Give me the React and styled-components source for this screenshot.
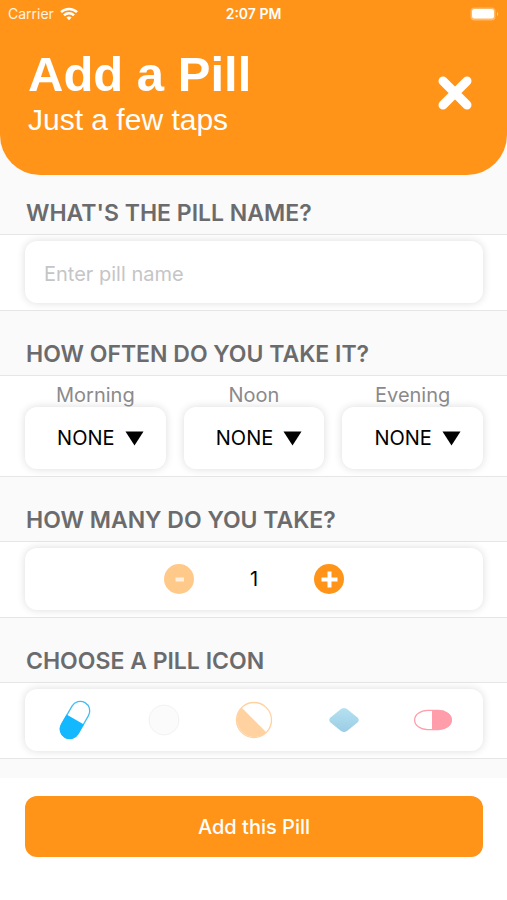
import React, { useState } from 'react';
import styled, { createGlobalStyle } from 'styled-components';

const ORANGE = '#ff9418';

const GlobalStyle = createGlobalStyle`
  * {
    box-sizing: border-box;
  }
  body {
    margin: 0;
    background: #fff;
    font-family: Inter, "Liberation Sans", sans-serif;
  }
  button, input, select {
    font-family: inherit;
  }
`;

const Header = styled.header`
  position: relative;
  height: 175px;
  margin-bottom: -45px;
  background: ${ORANGE};
  border-radius: 0 0 40px 40px;
  color: #fff;
`;

const StatusBar = styled.div`
  display: grid;
  grid-template-columns: 1fr auto 1fr;
  align-items: center;
  height: 27px;
  padding: 0 8px;
  font-size: 14px;
`;

const Carrier = styled.div`
  display: flex;
  align-items: center;
  gap: 6px;
  color: #fff3e3;
`;

const Clock = styled.div`
  font-weight: 600;
`;

const Battery = styled.svg`
  justify-self: end;
`;

const TitleRow = styled.div`
  display: flex;
  align-items: center;
  justify-content: space-between;
  padding: 20px 34px 0 28px;
`;

const Title = styled.h1`
  margin: 0;
  font: bold 49px/54px "Liberation Sans", sans-serif;
`;

const SubTitle = styled.p`
  margin: 0;
  font: 30px/38px "Liberation Sans", sans-serif;
`;

const CloseButton = styled.button`
  display: flex;
  padding: 0;
  border: 0;
  background: none;
  cursor: pointer;
`;

const Form = styled.form`
  padding-top: 40px;
  background: #fafafa;
`;

const SectionTitle = styled.h2`
  display: flex;
  align-items: flex-end;
  height: 64px;
  margin: 0;
  padding: 0 26px 5px;
  color: #6b6b6d;
  font-size: 23px;
  font-weight: 600;
  line-height: 32px;
`;

const SectionBody = styled.div`
  padding: ${({ $labeled }) => ($labeled ? '8px' : '6px')} 24px 7px 25px;
  background: #fff;
  border-top: 1px solid #e6e6e7;
  border-bottom: 1px solid #e6e6e7;
`;

const Card = styled.div`
  display: flex;
  align-items: center;
  justify-content: center;
  gap: ${({ $gap }) => $gap || '0'};
  height: 62px;
  padding: ${({ $padding }) => $padding || '0'};
  background: #fff;
  border-radius: 12px;
  box-shadow: 0 0 8px rgba(0, 0, 0, 0.14);
`;

const NameInput = styled.input`
  width: 100%;
  height: 100%;
  padding: 3px 19px 0;
  border: 0;
  border-radius: 12px;
  background: none;
  font-size: 20px;
  &::placeholder {
    color: #c5c5c7;
  }
`;

const Times = styled.div`
  display: grid;
  grid-template-columns: repeat(3, 1fr);
  gap: 18px;
`;

const TimeLabel = styled.label`
  display: block;
  color: #8a8a8c;
  font-size: 20px;
  line-height: 23px;
  text-align: center;
`;

const TimeSelect = styled.select`
  appearance: none;
  field-sizing: content;
  padding: 0;
  border: 0;
  background: none;
  color: #000;
  font-size: 20px;
`;

const RoundButton = styled.button`
  display: flex;
  width: 30px;
  height: 30px;
  padding: 0;
  border: 0;
  border-radius: 50%;
  background: ${ORANGE};
  opacity: ${({ disabled }) => (disabled ? 0.5 : 1)};
`;

const Count = styled.output`
  width: 30px;
  font-size: 20px;
  text-align: center;
`;

const IconButton = styled.button`
  display: flex;
  flex: 1;
  justify-content: center;
  padding: 0;
  border: 0;
  background: none;
  opacity: ${({ $selected }) => ($selected ? 1 : 0.45)};
`;

const Footer = styled.div`
  margin-top: 19px;
  padding: 18px 24px 44px 25px;
  background: #fff;
`;

const SubmitButton = styled.button`
  display: block;
  width: 100%;
  height: 61px;
  border: 0;
  border-radius: 12px;
  background: ${ORANGE};
  color: #fff;
  font-size: 20px;
  font-weight: 500;
`;

const WifiIcon = () => (
  <svg width="18" height="14" viewBox="0 0 18 14" fill="none" stroke="#fff" strokeWidth="2.5">
    <path d="M1 5.2C5.4 0.8 12.6 0.8 17 5.2" />
    <path d="M4 8.4C6.8 5.6 11.2 5.6 14 8.4" />
    <path d="M6.4 10.5C7.9 9.2 10.1 9.2 11.6 10.5L9 13.2Z" fill="#fff" stroke="none" />
  </svg>
);

const BatteryIcon = () => (
  <Battery width="29" height="14" viewBox="0 0 29 14">
    <rect x="0.5" y="0.5" width="25" height="13" rx="4" fill="#ffb866" />
    <rect x="2" y="2" width="22" height="9.5" rx="2.5" fill="#fff" />
    <path d="M27 5v4c1.6-.7 1.6-3.3 0-4z" fill="#ffc98c" />
  </Battery>
);

const pillIcons = [
  {
    name: 'Blue capsule',
    drawing: (
      <g transform="rotate(30 20 20)">
        <rect x="10.5" y="0" width="19" height="40" rx="9.5" fill="#fff" stroke="#3fbdf5" strokeWidth="1.3" />
        <path d="M10 19.5H30V30.5A10 10 0 0 1 10 30.5Z" fill="#14b8ff" />
      </g>
    ),
  },
  {
    name: 'White tablet',
    drawing: <circle cx="20" cy="20" r="15" fill="#f7f7f8" stroke="#e3e3e5" />,
  },
  {
    name: 'Orange half tablet',
    drawing: (
      <g>
        <circle cx="20" cy="20" r="17.5" fill="#fff" stroke="#ff9d2e" strokeWidth="1.3" />
        <path d="M7.5 7.5A17.7 17.7 0 0 0 32.5 32.5Z" fill="#ff9d2e" />
      </g>
    ),
  },
  {
    name: 'Blue diamond',
    drawing: (
      <g>
        <defs>
          <linearGradient id="diamond" x1="0" y1="0" x2="0" y2="1">
            <stop offset="0" stopColor="#5cbfe0" />
            <stop offset="1" stopColor="#2491c8" />
          </linearGradient>
        </defs>
        <path d="M17 9Q20 7 23 9L33.5 17.5Q36 20 33.5 22.5L23 31Q20 33 17 31L6.5 22.5Q4 20 6.5 17.5Z" fill="url(#diamond)" />
      </g>
    ),
  },
  {
    name: 'Red capsule',
    drawing: (
      <g>
        <rect x="1.6" y="10.4" width="36.8" height="19.2" rx="13" ry="9.600" fill="#fff" stroke="#ff2a45" strokeWidth="1.3" />
        <path d="M19 10H25.500A13 10 0 0 1 25.500 30H19Z" fill="#ff2a45" />
      </g>
    ),
  },
];

const TimeField = ({ name }) => (
  <div>
    <TimeLabel htmlFor={name}>{name}</TimeLabel>
    <Card $gap="10px" $padding="0 0 0 10px">
      <TimeSelect id={name}>
        <option>NONE</option>
      </TimeSelect>
      <svg width="19" height="15" viewBox="0 0 19 15">
        <path d="M0.5 0.5H18.5L9.5 14.5Z" />
      </svg>
    </Card>
  </div>
);

const App = () => {
  const [count, setCount] = useState(1);
  const [icon, setIcon] = useState(0);

  return (
    <>
      <GlobalStyle />
      <Header>
        <StatusBar>
          <Carrier>
            Carrier
            <WifiIcon />
          </Carrier>
          <Clock>2:07 PM</Clock>
          <BatteryIcon />
        </StatusBar>
        <TitleRow>
          <div>
            <Title>Add a Pill</Title>
            <SubTitle>Just a few taps</SubTitle>
          </div>
          <CloseButton aria-label="Close">
            <svg width="36" height="36" viewBox="0 0 36 36" stroke="#fff" strokeWidth="9" strokeLinecap="round">
              <path d="M6 6L30 30M30 6L6 30" />
            </svg>
          </CloseButton>
        </TitleRow>
      </Header>
      <Form onSubmit={(e) => e.preventDefault()}>
        <SectionTitle as="label" htmlFor="pill-name">WHAT'S THE PILL NAME?</SectionTitle>
        <SectionBody>
          <Card>
            <NameInput id="pill-name" placeholder="Enter pill name" />
          </Card>
        </SectionBody>

        <SectionTitle>HOW OFTEN DO YOU TAKE IT?</SectionTitle>
        <SectionBody $labeled>
          <Times>
            <TimeField name="Morning" />
            <TimeField name="Noon" />
            <TimeField name="Evening" />
          </Times>
        </SectionBody>

        <SectionTitle>HOW MANY DO YOU TAKE?</SectionTitle>
        <SectionBody>
          <Card $gap="45px">
            <RoundButton type="button" aria-label="Less" disabled={count <= 1} onClick={() => setCount(count - 1)}>
              <svg width="30" height="30" viewBox="0 0 30 30" stroke="#ffe0bd" strokeWidth="4">
                <path d="M11.5 15.5H20" />
              </svg>
            </RoundButton>
            <Count>{count}</Count>
            <RoundButton type="button" aria-label="More" onClick={() => setCount(count + 1)}>
              <svg width="30" height="30" viewBox="0 0 30 30" stroke="#fff" strokeWidth="4">
                <path d="M7.5 15.5H23.5M15.5 7.5V23.5" />
              </svg>
            </RoundButton>
          </Card>
        </SectionBody>

        <SectionTitle>CHOOSE A PILL ICON</SectionTitle>
        <SectionBody>
          <Card $padding="0 5px">
            {pillIcons.map((item, index) => (
              <IconButton
                type="button"
                key={item.name}
                aria-label={item.name}
                aria-pressed={icon === index}
                $selected={icon === index}
                onClick={() => setIcon(index)}
              >
                <svg width="40" height="40" viewBox="0 0 40 40">{item.drawing}</svg>
              </IconButton>
            ))}
          </Card>
        </SectionBody>

        <Footer>
          <SubmitButton type="submit">Add this Pill</SubmitButton>
        </Footer>
      </Form>
    </>
  );
};

export default App;
